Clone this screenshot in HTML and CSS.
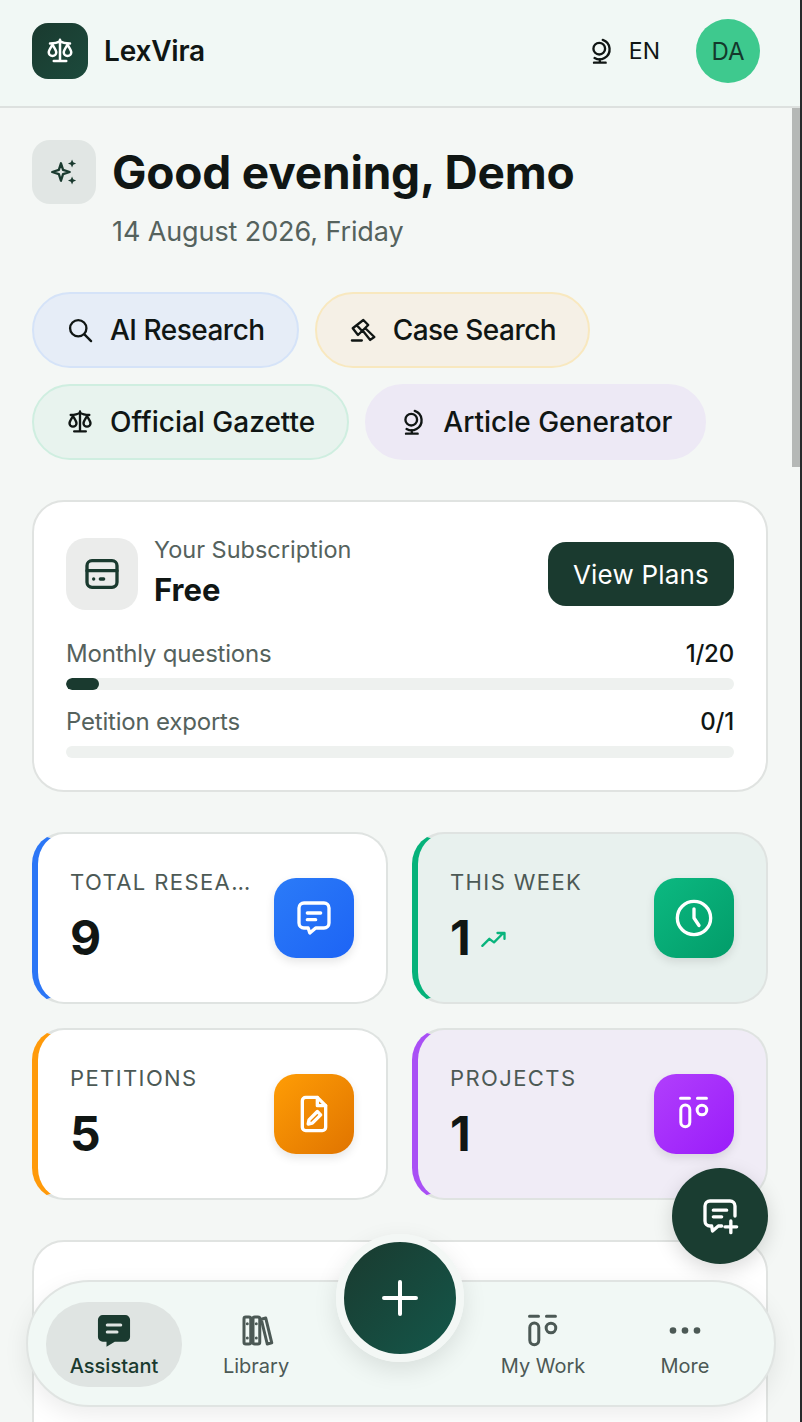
FILE: index.html
```html
<!DOCTYPE html>
<html lang="en">
<head>
  <meta charset="UTF-8">
  <meta name="viewport" content="width=device-width, initial-scale=1.0">
  <title>LexVira</title>
  <link rel="stylesheet" href="styles.css">
</head>
<body>
  <div class="app">
    <header class="topbar">
      <div class="brand">
        <div class="brand-logo">
          <svg viewBox="0 0 24 24" width="30" height="30" class="ico"><path d="M12 3v17M7 20h10M4 6c3 0 6-.5 8-2 2 1.500 5 2 8 2"/><path d="M6 7c-1.500 2.500-3 4.500-3 6a3 3 0 0 0 6 0c0-1.500-1.500-3.500-3-6zM18 7c-1.500 2.500-3 4.500-3 6a3 3 0 0 0 6 0c0-1.500-1.500-3.500-3-6z"/></svg>
        </div>
        <span class="brand-name">LexVira</span>
      </div>
      <div class="top-actions">
        <div class="lang">
          <svg viewBox="0 0 24 24" width="28" height="28" class="ico"><circle cx="10.500" cy="10" r="5"/><path d="M13.500 2.500a8.500 8.500 0 0 1 1.500 15.500 8.500 8.500 0 0 1-8.500 0M11 19v3M6 22h10"/></svg>
          <span>EN</span>
        </div>
        <div class="avatar">DA</div>
      </div>
    </header>

    <main class="content">
      <section class="greeting">
        <div class="greeting-icon">
          <svg viewBox="0 0 24 24" width="28" height="28" class="solid"><path class="outline" d="M9.400 4.500l1.800 5.700 5.700 1.800-5.700 1.800-1.800 5.700-1.800-5.700L1.900 12l5.700-1.800z"/><path d="M18.900 1.200l1 2.500 2.500 1-2.500 1-1 2.500-1-2.500-2.500-1 2.500-1zM18.900 15.800l1 2.500 2.500 1-2.500 1-1 2.500-1-2.500-2.500-1 2.500-1z"/></svg>
        </div>
        <div>
          <h1>Good evening, Demo</h1>
          <p class="date">14 August 2026, Friday</p>
        </div>
      </section>

      <nav class="pills">
        <a class="pill pill-blue">
          <svg viewBox="0 0 24 24" width="28" height="28" class="ico"><circle cx="10.500" cy="10.500" r="7"/><path d="M16 16l5.500 5.500"/></svg>
          AI Research
        </a>
        <a class="pill pill-amber">
          <svg viewBox="0 0 24 24" width="28" height="28" class="ico"><path d="M3.200 10.500l9.100-7.100 4.200 4.300-8.800 8.600zM6.500 7.800l4.600 4.800M11.500 12.200l6.700 8.300 3.500-2.500-7.700-7.500M2.500 21H11"/></svg>
          Case Search
        </a>
        <a class="pill pill-green">
          <svg viewBox="0 0 24 24" width="28" height="28" class="ico"><path d="M12 3v17M7 20h10M4 6c3 0 6-.5 8-2 2 1.500 5 2 8 2"/><path d="M6 7c-1.500 2.500-3 4.500-3 6a3 3 0 0 0 6 0c0-1.500-1.500-3.500-3-6zM18 7c-1.500 2.500-3 4.500-3 6a3 3 0 0 0 6 0c0-1.500-1.500-3.500-3-6z"/></svg>
          Official Gazette
        </a>
        <a class="pill pill-violet">
          <svg viewBox="0 0 24 24" width="28" height="28" class="ico"><circle cx="10.500" cy="10" r="5"/><path d="M13.500 2.500a8.500 8.500 0 0 1 1.500 15.500 8.500 8.500 0 0 1-8.500 0M11 19v3M6 22h10"/></svg>
          Article Generator
        </a>
      </nav>

      <section class="card plan">
        <div class="plan-head">
          <div class="plan-icon">
            <svg viewBox="0 0 24 24" width="40" height="40" class="ico"><rect x="3" y="4" width="18" height="16" rx="3"/><path d="M3 10h18M7 15h.01M11 15h2"/></svg>
          </div>
          <div class="plan-name">
            <span class="plan-label">Your Subscription</span>
            <strong>Free</strong>
          </div>
          <button class="plan-btn">View Plans</button>
        </div>
        <div class="usage">
          <div class="usage-row"><span>Monthly questions</span><b>1/20</b></div>
          <div class="bar"><div class="bar-fill" style="width:5%"></div></div>
        </div>
        <div class="usage">
          <div class="usage-row"><span>Petition exports</span><b>0/1</b></div>
          <div class="bar"></div>
        </div>
      </section>

      <section class="stats">
        <div class="stat stat-blue">
          <div class="stat-text">
            <div class="stat-label">TOTAL RESEARCH</div>
            <div class="stat-num">9</div>
          </div>
          <div class="stat-icon">
            <svg viewBox="0 0 24 24" width="40" height="40" class="ico"><path d="M6 3h12a3 3 0 0 1 3 3v9a3 3 0 0 1-3 3h-5l-3.500 3-1-3H6a3 3 0 0 1-3-3V6a3 3 0 0 1 3-3z"/><path d="M8 9h8M8 13h5"/></svg>
          </div>
        </div>
        <div class="stat stat-green">
          <div class="stat-text">
            <div class="stat-label">THIS WEEK</div>
            <div class="stat-num">1
              <svg viewBox="0 0 24 24" width="28" height="28" class="trend"><path d="M2 17l6-6 4 3 8-8M15 6h6v5"/></svg>
            </div>
          </div>
          <div class="stat-icon">
            <svg viewBox="0 0 24 24" width="40" height="40" class="ico"><circle cx="12" cy="12" r="10"/><path d="M12 6.500V12l3 4.500"/></svg>
          </div>
        </div>
        <div class="stat stat-orange">
          <div class="stat-text">
            <div class="stat-label">PETITIONS</div>
            <div class="stat-num">5</div>
          </div>
          <div class="stat-icon">
            <svg viewBox="0 0 24 24" width="40" height="40" class="ico"><path d="M14 2H7a2 2 0 0 0-2 2v16a2 2 0 0 0 2 2h10a2 2 0 0 0 2-2V7z"/><path d="M14 2v5h5M8.500 18l.5-2.500 5-5 2 2-5 5z"/></svg>
          </div>
        </div>
        <div class="stat stat-purple">
          <div class="stat-text">
            <div class="stat-label">PROJECTS</div>
            <div class="stat-num">1</div>
          </div>
          <div class="stat-icon">
            <svg viewBox="0 0 24 24" width="36" height="36" class="ico"><path d="M3 1.500h6M14.300 1.500h6"/><rect x="3.200" y="6" width="6" height="14.500" rx="3"/><circle cx="17.300" cy="9.300" r="3.200"/></svg>
          </div>
        </div>
      </section>

      <section class="card recent"></section>
      <div class="scroll-thumb"></div>
    </main>

    <button class="chat-fab">
      <svg viewBox="0 0 24 24" width="40" height="40" class="ico"><path d="M21 12V6a3 3 0 0 0-3-3H6a3 3 0 0 0-3 3v9a3 3 0 0 0 3 3h1l.5 3 3.500-3h2"/><path d="M8 8.500h8M8 12.500h5M18.500 15v7M15 18.500h7"/></svg>
    </button>

    <nav class="tabbar">
      <a class="tab active">
        <svg viewBox="0 0 24 24" width="36" height="36" class="solid"><path d="M4.500.7h15a3.200 3.200 0 0 1 3.200 3.200v11.400a3.200 3.200 0 0 1-3.200 3.200h-7l-5.500 3.300v-3.300H4.500a3.200 3.200 0 0 1-3.200-3.200V3.900A3.200 3.200 0 0 1 4.500.7z"/><path d="M7.500 7.300h9M7.500 12h6.500" class="cut"/></svg>
        <span>Assistant</span>
      </a>
      <a class="tab">
        <svg viewBox="0 0 24 24" width="36" height="36" class="ico"><rect x="4" y="2" width="4.500" height="18" rx="1.200"/><rect x="10" y="2" width="4.500" height="18" rx="1.200"/><path d="M15.500 3.500l3-.8 4 16.500-3 .8zM6.200 6.500v.01M12.200 6.500v.01M6.200 16v.01M12.200 16v.01"/></svg>
        <span>Library</span>
      </a>
      <div class="tab-spacer"></div>
      <a class="tab">
        <svg viewBox="0 0 24 24" width="36" height="36" class="ico"><path d="M3 1.500h6M14.300 1.500h6"/><rect x="3.200" y="6" width="6" height="14.500" rx="3"/><circle cx="17.300" cy="9.300" r="3.200"/></svg>
        <span>My Work</span>
      </a>
      <a class="tab">
        <svg viewBox="0 0 24 24" width="36" height="36" class="solid"><circle cx="4" cy="11" r="2.200"/><circle cx="12" cy="11" r="2.200"/><circle cx="20" cy="11" r="2.200"/></svg>
        <span>More</span>
      </a>
    </nav>

    <button class="add-fab">
      <svg viewBox="0 0 24 24" width="48" height="48" class="ico"><path d="M12 4v16M4 12h16"/></svg>
    </button>
  </div>
</body>
</html>
```

FILE: styles.css
```css
* {
  box-sizing: border-box;
}

body {
  margin: 0;
  font-family: Inter, "Noto Sans", sans-serif;
  color: #101614;
  background: #f4f7f5;
}

.ico {
  fill: none;
  stroke: currentColor;
  stroke-width: 2;
  stroke-linecap: round;
  stroke-linejoin: round;
  flex-shrink: 0;
}

.solid {
  fill: currentColor;
  flex-shrink: 0;
}

.solid .outline {
  fill: none;
  stroke: currentColor;
  stroke-width: 2;
  stroke-linejoin: round;
}

.solid .cut {
  fill: none;
  stroke: #dfe4e2;
  stroke-width: 2;
  stroke-linecap: round;
}

.app {
  position: relative;
  width: 802px;
  height: 1422px;
  overflow: hidden;
  display: flex;
  flex-direction: column;
  border-right: 2px solid #26282a;
}

/* top bar */
.topbar {
  height: 108px;
  flex-shrink: 0;
  display: flex;
  align-items: center;
  justify-content: space-between;
  padding: 0 40px 4px 32px;
  background: #f1f8f5;
  border-bottom: 2px solid #dde1df;
}

.brand {
  display: flex;
  align-items: center;
  gap: 16px;
}

.brand-logo {
  width: 56px;
  height: 56px;
  border-radius: 16px;
  display: flex;
  align-items: center;
  justify-content: center;
  color: #fff;
  background: linear-gradient(135deg, #1a3a2f, #1c4a3c);
}

.brand-name {
  font-size: 28px;
  font-weight: 600;
  letter-spacing: -0.2px;
}

.top-actions {
  display: flex;
  align-items: center;
  gap: 36px;
}

.lang {
  display: flex;
  align-items: center;
  gap: 14px;
  font-size: 23px;
}

.avatar {
  width: 64px;
  height: 64px;
  border-radius: 50%;
  background: #3ec98e;
  display: flex;
  align-items: center;
  justify-content: center;
  font-size: 24px;
  color: #14382c;
}

/* main column */
.content {
  position: relative;
  flex: 1;
  min-height: 0;
  overflow: hidden;
  padding: 32px 32px 0 32px;
}

.scroll-thumb {
  position: absolute;
  top: 0;
  right: 0;
  width: 8px;
  height: 359px;
  background: #b5b8b6;
}

.greeting {
  display: flex;
  gap: 16px;
}

.greeting-icon {
  width: 64px;
  height: 64px;
  border-radius: 18px;
  flex-shrink: 0;
  background: #e1e6e4;
  color: #1a3a2f;
  display: flex;
  align-items: center;
  justify-content: center;
}

h1 {
  margin: 0;
  font-size: 46px;
  line-height: 64px;
  font-weight: 700;
  letter-spacing: -0.2px;
}

.date {
  margin: 8px 0 0;
  font-size: 27px;
  line-height: 40px;
  letter-spacing: -0.1px;
  color: #55625d;
}

.pills {
  display: flex;
  flex-wrap: wrap;
  gap: 16px;
  margin-top: 40px;
}

.pill {
  height: 76px;
  padding: 0 32px;
  border-radius: 38px;
  border: 2px solid;
  display: flex;
  align-items: center;
  gap: 16px;
  font-size: 28px;
  font-weight: 450;
}

.pill-blue {
  background: #e6edf7;
  border-color: #d5e3f8;
  letter-spacing: -0.5px;
}

.pill-amber {
  background: #f5f0e6;
  border-color: #f8e8bf;
  letter-spacing: -0.55px;
}

.pill-green {
  background: #e8f3ee;
  border-color: #cfeee0;
}

.pill-violet {
  background: #ede9f5;
  border-color: #ede9f5;
}

.card {
  background: #fff;
  border: 2px solid #e0e3e1;
  border-radius: 32px;
}

.plan {
  margin-top: 40px;
  height: 292px;
  padding: 32px 32px 0;
}

.plan-head {
  display: flex;
  align-items: center;
  gap: 16px;
  margin-bottom: 24px;
}

.plan-icon {
  width: 72px;
  height: 72px;
  border-radius: 20px;
  background: #ebeceb;
  color: #1a3a2f;
  display: flex;
  align-items: center;
  justify-content: center;
}

.plan-name {
  flex: 1;
  display: flex;
  flex-direction: column;
  gap: 4px;
  padding-bottom: 4px;
}

.plan-label {
  font-size: 23.500px;
  line-height: 32px;
  color: #55625d;
}

.plan-name strong {
  font-size: 31px;
  line-height: 40px;
  font-weight: 700;
}

.plan-btn {
  width: 186px;
  height: 64px;
  border: 0;
  border-radius: 18px;
  background: #1a3a2f;
  color: #fff;
  font: 400 26px Inter, sans-serif;
  letter-spacing: 0.2px;
}

.usage {
  margin-top: 16px;
}

.usage-row {
  display: flex;
  justify-content: space-between;
  font-size: 24px;
  line-height: 32px;
  letter-spacing: -0.2px;
  color: #55625d;
}

.usage-row b {
  font-weight: 500;
  color: #101614;
}

.bar {
  margin-top: 8px;
  height: 12px;
  border-radius: 6px;
  background: #eef1ef;
  overflow: hidden;
}

.bar-fill {
  height: 100%;
  border-radius: 6px;
  background: #1a3a2f;
}

/* stat cards */
.stats {
  display: grid;
  grid-template-columns: 356px 356px;
  gap: 24px;
  margin-top: 40px;
}

.stat {
  height: 172px;
  padding: 32px 32px 0 32px;
  border-radius: 32px;
  border: 2px solid #dfe3e1;
  border-left: 6px solid;
  display: flex;
  justify-content: space-between;
  gap: 10px;
  background: #fff;
}

.stat-blue {
  border-left-color: #2b76f6;
}

.stat-green {
  border-left-color: #05b27a;
  background: #e8f1ee;
}

.stat-orange {
  border-left-color: #ff9a0a;
}

.stat-purple {
  border-left-color: #a94ff5;
  background: #f0ecf6;
}

.stat-text {
  min-width: 0;
  flex: 1;
}

.stat-label {
  font-size: 22px;
  line-height: 32px;
  letter-spacing: 1.4px;
  color: #4c5955;
  white-space: nowrap;
  overflow: hidden;
  text-overflow: ellipsis;
}

.stat-num {
  margin-top: 12px;
  font-size: 48px;
  line-height: 56px;
  font-weight: 700;
  display: flex;
  align-items: center;
  gap: 9px;
}

.trend {
  margin-top: 4px;
  fill: none;
  stroke: #08b47c;
  stroke-width: 2;
  stroke-linecap: round;
  stroke-linejoin: round;
}

.stat-icon {
  width: 80px;
  height: 80px;
  flex-shrink: 0;
  margin-top: 12px;
  border-radius: 22px;
  color: #fff;
  display: flex;
  align-items: center;
  justify-content: center;
  box-shadow: 0 4px 10px rgba(0, 0, 0, 0.1);
}

.stat-blue .stat-icon {
  background: linear-gradient(135deg, #2b7bf8, #1d64f5);
}

.stat-green .stat-icon {
  background: linear-gradient(135deg, #0cb981, #029c69);
}

.stat-orange .stat-icon {
  background: linear-gradient(135deg, #ff9d05, #e07400);
}

.stat-purple .stat-icon {
  background: linear-gradient(135deg, #b13ffc, #9a1cfa);
}

.recent {
  margin-top: 40px;
  height: 400px;
}

/* floating things */
.chat-fab {
  position: absolute;
  left: 672px;
  top: 1168px;
  width: 96px;
  height: 96px;
  border: 0;
  border-radius: 50%;
  background: #1a3d31;
  color: #fff;
  display: flex;
  align-items: center;
  justify-content: center;
  box-shadow: 0 6px 20px rgba(0, 0, 0, 0.15);
}

.tabbar {
  position: absolute;
  left: 26px;
  top: 1280px;
  width: 750px;
  height: 127px;
  padding: 2px 18px 0;
  border-radius: 64px;
  border: 2px solid #e0e4e2;
  background: #f1f8f5;
  display: flex;
  align-items: center;
  box-shadow: 0 8px 24px rgba(0, 0, 0, 0.08);
}

.tab {
  flex: none;
  width: 136px;
  height: 85px;
  padding-top: 12px;
  margin-right: 6px;
  border-radius: 42px;
  display: flex;
  flex-direction: column;
  align-items: center;
  font-size: 20px;
  line-height: 26px;
  color: #4c5955;
}

.tab svg {
  margin-bottom: 3px;
}

.tab.active {
  background: #dfe4e2;
  color: #1a3a2f;
  font-weight: 500;
}

.tab-spacer {
  flex: none;
  width: 145px;
}

.add-fab {
  position: absolute;
  left: 336px;
  top: 1234px;
  width: 128px;
  height: 128px;
  border: 8px solid #f3f7f5;
  border-radius: 50%;
  background: linear-gradient(135deg, #1a3a2f, #14574a);
  color: #fff;
  display: flex;
  align-items: center;
  justify-content: center;
  box-shadow: 0 8px 24px rgba(0, 0, 0, 0.1);
}
```
